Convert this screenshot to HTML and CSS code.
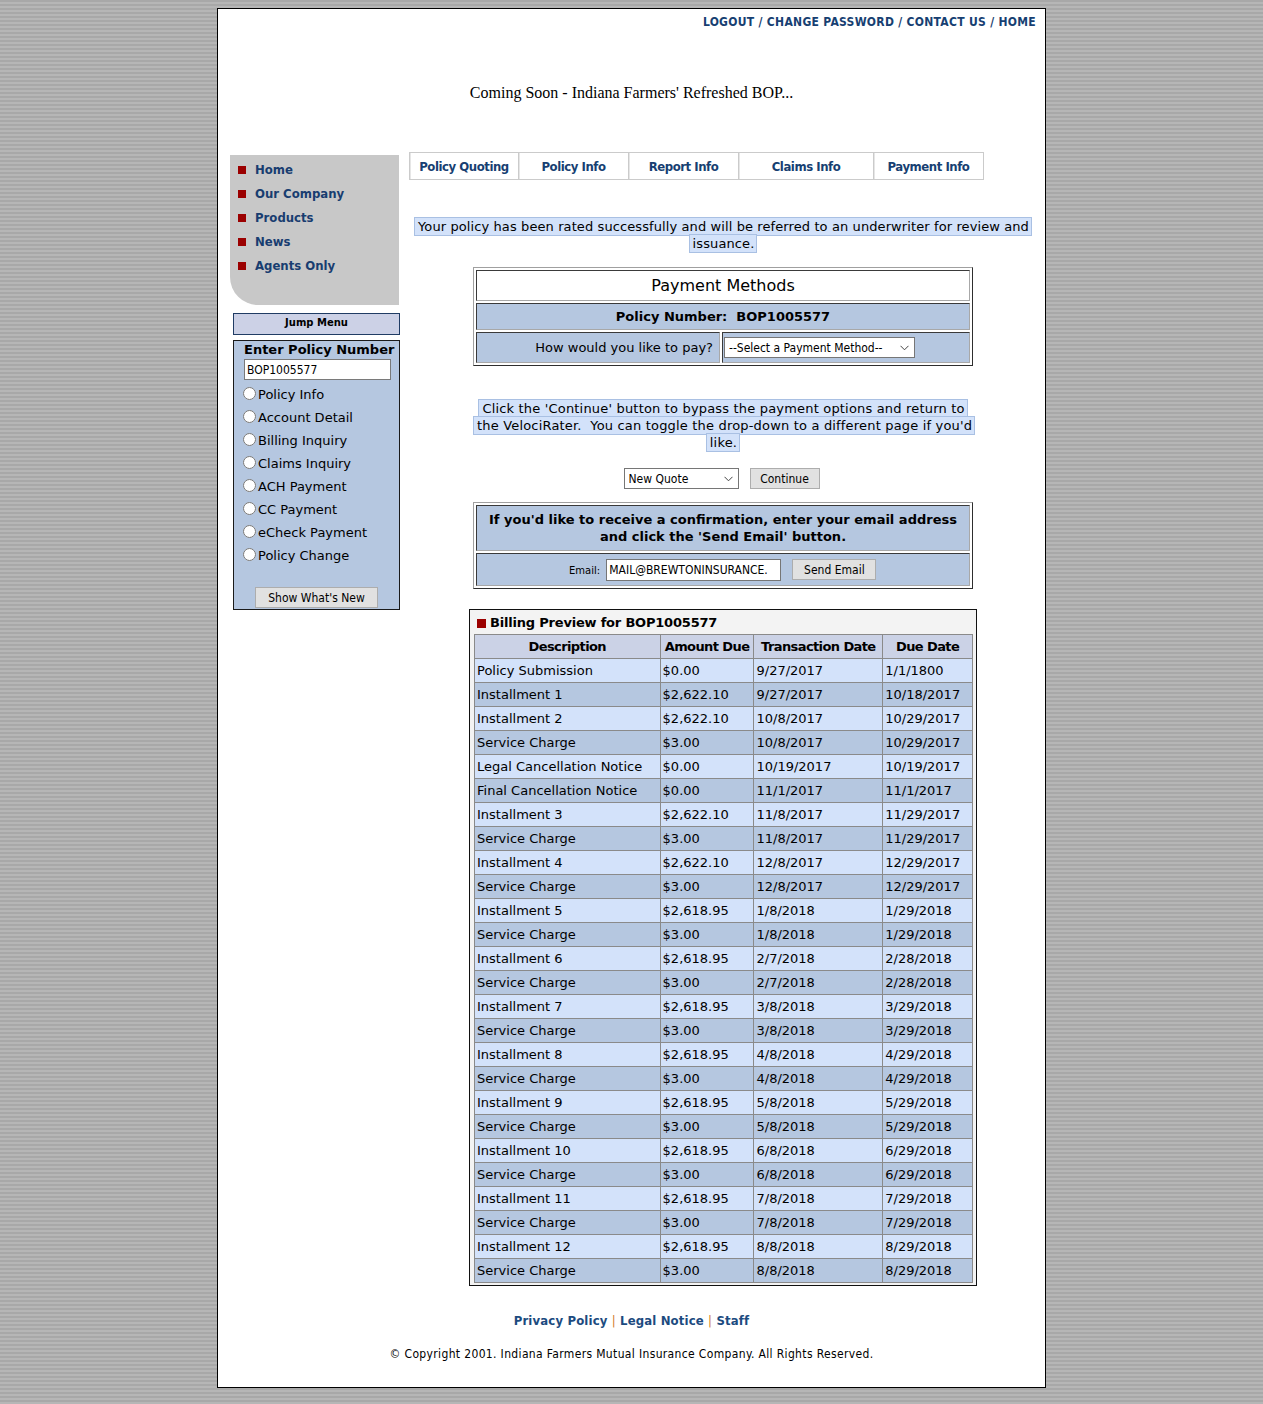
FILE: index.html
```html
<!DOCTYPE html>
<html>
<head>
<meta charset="utf-8">
<title>Payment Methods</title>
<link rel="stylesheet" href="styles.css">
</head>
<body>
<div class="page">
  <div class="toplinks">
    <a href="#">LOGOUT</a> / <a href="#">CHANGE PASSWORD</a> / <a href="#">CONTACT US</a> / <a href="#">HOME</a>
  </div>
  <div class="banner">Coming Soon - Indiana Farmers' Refreshed BOP...</div>

  <div class="layout">
    <div class="sidebar">
      <ul class="sidenav">
        <li><a href="#">Home</a></li>
        <li><a href="#">Our Company</a></li>
        <li><a href="#">Products</a></li>
        <li><a href="#">News</a></li>
        <li><a href="#">Agents Only</a></li>
      </ul>
      <div class="jump-title">Jump Menu</div>
      <div class="jump-panel">
        <div class="jump-label">Enter Policy Number</div>
        <input class="jump-input" type="text" value="BOP1005577">
        <label class="radio"><input type="radio" name="jm">Policy Info</label>
        <label class="radio"><input type="radio" name="jm">Account Detail</label>
        <label class="radio"><input type="radio" name="jm">Billing Inquiry</label>
        <label class="radio"><input type="radio" name="jm">Claims Inquiry</label>
        <label class="radio"><input type="radio" name="jm">ACH Payment</label>
        <label class="radio"><input type="radio" name="jm">CC Payment</label>
        <label class="radio"><input type="radio" name="jm">eCheck Payment</label>
        <label class="radio"><input type="radio" name="jm">Policy Change</label>
        <div class="jump-btnrow"><button class="btn">Show What's New</button></div>
      </div>
    </div>

    <div class="main">
      <div class="tabs">
        <a class="tab" href="#">Policy Quoting</a>
        <a class="tab" href="#">Policy Info</a>
        <a class="tab" href="#">Report Info</a>
        <a class="tab tab-wide" href="#">Claims Info</a>
        <a class="tab" href="#">Payment Info</a>
      </div>

      <p class="notice wide"><span class="hl">Your policy has been rated successfully and will be referred to an underwriter for review and<br>issuance.</span></p>

      <table class="pm">
        <tr><td colspan="2" class="pm-title">Payment Methods</td></tr>
        <tr><td colspan="2" class="pm-policy">Policy Number:&nbsp; BOP1005577</td></tr>
        <tr>
          <td class="pm-q">How would you like to pay?</td>
          <td class="pm-sel">
            <span class="selwrap sel-pay">
              <select><option>--Select a Payment Method--</option></select>
              <svg class="chev" width="9" height="6" viewBox="0 0 9 6"><path d="M0.5 0.8 L4.5 4.8 L8.5 0.8" fill="none" stroke="#444" stroke-width="1"/></svg>
            </span>
          </td>
        </tr>
      </table>

      <p class="notice narrow"><span class="hl">Click the 'Continue' button to bypass the payment options and return to<br>the VelociRater.&nbsp; You can toggle the drop-down to a different page if you'd<br>like.</span></p>

      <div class="continue-row">
        <span class="selwrap sel-quote">
          <select><option>New Quote</option></select>
          <svg class="chev" width="9" height="6" viewBox="0 0 9 6"><path d="M0.5 0.8 L4.5 4.8 L8.5 0.8" fill="none" stroke="#444" stroke-width="1"/></svg>
        </span>
        <button class="btn btn-cont">Continue</button>
      </div>

      <table class="pm email">
        <tr><td class="em-head">If you'd like to receive a confirmation, enter your email address and click the 'Send Email' button.</td></tr>
        <tr>
          <td class="em-row">
            <span class="em-label">Email:</span>
            <input class="em-input" type="text" value="MAIL@BREWTONINSURANCE.">
            <button class="btn btn-send">Send Email</button>
          </td>
        </tr>
      </table>

      <div class="billing">
        <div class="billing-title"><span class="sq"></span>Billing Preview for BOP1005577</div>
        <table class="bill">
          <colgroup><col class="c1"><col class="c2"><col class="c3"><col class="c4"></colgroup>
          <thead>
            <tr><th>Description</th><th>Amount Due</th><th>Transaction Date</th><th>Due Date</th></tr>
          </thead>
          <tbody>
            <tr><td>Policy Submission</td><td>$0.00</td><td>9/27/2017</td><td>1/1/1800</td></tr>
            <tr><td>Installment 1</td><td>$2,622.10</td><td>9/27/2017</td><td>10/18/2017</td></tr>
            <tr><td>Installment 2</td><td>$2,622.10</td><td>10/8/2017</td><td>10/29/2017</td></tr>
            <tr><td>Service Charge</td><td>$3.00</td><td>10/8/2017</td><td>10/29/2017</td></tr>
            <tr><td>Legal Cancellation Notice</td><td>$0.00</td><td>10/19/2017</td><td>10/19/2017</td></tr>
            <tr><td>Final Cancellation Notice</td><td>$0.00</td><td>11/1/2017</td><td>11/1/2017</td></tr>
            <tr><td>Installment 3</td><td>$2,622.10</td><td>11/8/2017</td><td>11/29/2017</td></tr>
            <tr><td>Service Charge</td><td>$3.00</td><td>11/8/2017</td><td>11/29/2017</td></tr>
            <tr><td>Installment 4</td><td>$2,622.10</td><td>12/8/2017</td><td>12/29/2017</td></tr>
            <tr><td>Service Charge</td><td>$3.00</td><td>12/8/2017</td><td>12/29/2017</td></tr>
            <tr><td>Installment 5</td><td>$2,618.95</td><td>1/8/2018</td><td>1/29/2018</td></tr>
            <tr><td>Service Charge</td><td>$3.00</td><td>1/8/2018</td><td>1/29/2018</td></tr>
            <tr><td>Installment 6</td><td>$2,618.95</td><td>2/7/2018</td><td>2/28/2018</td></tr>
            <tr><td>Service Charge</td><td>$3.00</td><td>2/7/2018</td><td>2/28/2018</td></tr>
            <tr><td>Installment 7</td><td>$2,618.95</td><td>3/8/2018</td><td>3/29/2018</td></tr>
            <tr><td>Service Charge</td><td>$3.00</td><td>3/8/2018</td><td>3/29/2018</td></tr>
            <tr><td>Installment 8</td><td>$2,618.95</td><td>4/8/2018</td><td>4/29/2018</td></tr>
            <tr><td>Service Charge</td><td>$3.00</td><td>4/8/2018</td><td>4/29/2018</td></tr>
            <tr><td>Installment 9</td><td>$2,618.95</td><td>5/8/2018</td><td>5/29/2018</td></tr>
            <tr><td>Service Charge</td><td>$3.00</td><td>5/8/2018</td><td>5/29/2018</td></tr>
            <tr><td>Installment 10</td><td>$2,618.95</td><td>6/8/2018</td><td>6/29/2018</td></tr>
            <tr><td>Service Charge</td><td>$3.00</td><td>6/8/2018</td><td>6/29/2018</td></tr>
            <tr><td>Installment 11</td><td>$2,618.95</td><td>7/8/2018</td><td>7/29/2018</td></tr>
            <tr><td>Service Charge</td><td>$3.00</td><td>7/8/2018</td><td>7/29/2018</td></tr>
            <tr><td>Installment 12</td><td>$2,618.95</td><td>8/8/2018</td><td>8/29/2018</td></tr>
            <tr><td>Service Charge</td><td>$3.00</td><td>8/8/2018</td><td>8/29/2018</td></tr>
          </tbody>
        </table>
      </div>
    </div>
  </div>

  <div class="footer">
    <div class="footlinks"><a href="#">Privacy Policy</a> <span class="sep">|</span> <a href="#">Legal Notice</a> <span class="sep">|</span> <a href="#">Staff</a></div>
    <div class="copy">&copy; Copyright 2001. Indiana Farmers Mutual Insurance Company. All Rights Reserved.</div>
  </div>
</div>
</body>
</html>
```

FILE: styles.css
```css
html, body {
  margin: 0;
  padding: 0;
}
body {
  margin: 8px;
  background-color: #aaaaaa;
  background-image: repeating-linear-gradient(to bottom, #a8a8a8 0px, #a8a8a8 2px, #b6b6b6 2px, #b6b6b6 4px);
  font-family: "DejaVu Sans", Verdana, sans-serif;
  font-size: 13px;
  color: #000;
}
a { text-decoration: none; }

.page {
  width: 827px;
  margin: 0 auto;
  background: #fff;
  border: 1px solid #000;
  padding-bottom: 25px;
}

.toplinks {
  text-align: right;
  padding: 6px 9px 0 0;
  font-family: "DejaVu Sans Condensed", Tahoma, sans-serif;
  font-weight: bold;
  font-size: 12px;
  letter-spacing: 0.3px;
  line-height: 14px;
  color: #1a3e6e;
}
.toplinks a { color: #173f72; }

.banner {
  font-family: "Liberation Serif", "Times New Roman", serif;
  font-size: 16px;
  text-align: center;
  padding-top: 54px;
  height: 69px;
  line-height: 20px;
}

.layout {
  display: flex;
  align-items: flex-start;
  padding-left: 12px;
}

/* Sidebar */
.sidebar {
  width: 171px;
  padding-top: 3px;
}
.sidenav {
  list-style: none;
  margin: 0;
  padding: 3px 0 0 0;
  width: 169px;
  height: 147px;
  background: #c8c8c8;
  border-bottom-left-radius: 28px;
}
.sidenav li {
  height: 24px;
  line-height: 16px;
  display: flex;
  align-items: center;
  padding-left: 8px;
}
.sidenav li::before {
  content: "";
  width: 8px;
  height: 8px;
  background: #9b0000;
  margin-right: 9px;
  flex: none;
}
.sidenav a {
  font-family: "DejaVu Sans Condensed", Tahoma, sans-serif;
  font-weight: bold;
  font-size: 13px;
  color: #183d70;
}

.jump-title {
  margin: 8px 0 0 3px;
  width: 165px;
  height: 20px;
  border: 1px solid #203c64;
  background: #ccd1e6;
  text-align: center;
  font-weight: bold;
  font-size: 10px;
  line-height: 18px;
}
.jump-panel {
  margin: 5px 0 0 3px;
  width: 165px;
  border: 1px solid #1a1a1a;
  background: #b5c7e0;
  padding: 1px 0 0 0;
  height: 267px;
}
.jump-label {
  font-weight: bold;
  font-size: 13px;
  line-height: 16px;
  padding-left: 10px;
}
.jump-input {
  display: block;
  margin: 1px 0 3px 10px;
  width: 147px;
  height: 21px;
  box-sizing: border-box;
  border: 1px solid #7a7a7a;
  padding: 0 2px;
  font-family: "DejaVu Sans Condensed", Tahoma, sans-serif;
  font-size: 12px;
  color: #000;
  background: #fff;
}
.radio {
  display: flex;
  align-items: center;
  height: 23px;
  padding-left: 8px;
  font-size: 13px;
}
.radio input {
  margin: 0 2px 3px 1px;
  width: 13px;
  height: 13px;
  accent-color: #333;
}
.jump-btnrow {
  text-align: center;
  margin-top: 20px;
}

.btn {
  font-family: "DejaVu Sans Condensed", Tahoma, sans-serif;
  font-size: 12px;
  background: #e1e1e1;
  border: 1px solid #adadad;
  color: #000;
  height: 21px;
  padding: 0 8px;
  border-radius: 0;
}
.jump-btnrow .btn { width: 123px; padding: 0; }

/* Main */
.main {
  width: 623px;
  margin-left: 8px;
}
.tabs {
  display: flex;
  width: 575px;
}
.tab {
  width: 110px;
  height: 28px;
  box-sizing: border-box;
  border: 1px solid #cbcbcb;
  border-left: 0;
  display: flex;
  align-items: center;
  justify-content: center;
  font-family: "DejaVu Sans Condensed", Tahoma, sans-serif;
  font-weight: bold;
  font-size: 13px;
  letter-spacing: -0.45px;
  color: #173f72;
  background: #fff;
  box-shadow: inset 1px 0 0 #e6e6e6;
}
.tab:first-child { border-left: 1px solid #cbcbcb; }
.tab-wide { width: 135px; }

.notice {
  text-align: center;
  margin: 0;
  font-size: 13px;
  line-height: 17px;
  white-space: nowrap;
}
.notice.wide {
  padding-top: 38px;
  margin-left: 5px;
  letter-spacing: 0.1px;
}
.notice.narrow {
  width: 500px;
  margin: 34px 0 0 64px;
  letter-spacing: 0.18px;
}
.hl {
  background: #d3e2fa;
  border: 1px solid #a9c0e3;
  padding: 1px 2px 1px 3px;
  -webkit-box-decoration-break: clone;
  box-decoration-break: clone;
}

.pm {
  width: 500px;
  margin: 15px 0 0 64px;
  border-collapse: separate;
  border-spacing: 2px;
  border: 1px solid;
  border-color: #a0a0a0 #2e2e2e #2e2e2e #a0a0a0;
}
.pm td {
  border: 1px solid;
  border-color: #3a3a3a #a8a8a8 #a8a8a8 #3a3a3a;
  padding: 0;
}
.pm-title {
  background: #fff;
  text-align: center;
  font-size: 16px;
  height: 29px;
}
.pm-policy {
  background: #b5c7e0;
  text-align: center;
  font-weight: bold;
  font-size: 13px;
  height: 25px;
}
.pm-q {
  background: #b5c7e0;
  text-align: right;
  width: 236px;
  height: 29px;
  padding-right: 6px !important;
  font-size: 13px;
}
.pm-sel {
  background: #b5c7e0;
  padding-left: 1px !important;
}

.selwrap {
  position: relative;
  display: inline-block;
  vertical-align: middle;
}
.selwrap select {
  -webkit-appearance: none;
  appearance: none;
  font-family: "DejaVu Sans Condensed", Tahoma, sans-serif;
  font-size: 12px;
  border: 1px solid #767676;
  background: #fff;
  color: #000;
  height: 21px;
  padding: 0 0 0 4px;
  border-radius: 0;
  box-sizing: border-box;
}
.chev {
  position: absolute;
  right: 6px;
  top: 8px;
  pointer-events: none;
}
.sel-pay select { width: 191px; }
.sel-quote select { width: 115px; }

.continue-row {
  text-align: center;
  margin-top: 17px;
  height: 21px;
  font-size: 0;
  padding-left: 2px;
}
.btn-cont { width: 70px; padding: 0; margin-left: 11px; vertical-align: middle; }

.pm.email { margin-top: 13px; }
.em-head {
  background: #b5c7e0;
  text-align: center;
  font-weight: bold;
  font-size: 13px;
  line-height: 17px;
  padding: 5px 12px !important;
}
.em-row {
  background: #b5c7e0;
  height: 31px;
  padding-left: 92px !important;
  text-align: left;
}
.em-label { font-size: 10px; vertical-align: middle; }
.em-input {
  width: 175px;
  height: 22px;
  box-sizing: border-box;
  border: 1px solid #767676;
  font-family: "DejaVu Sans Condensed", Tahoma, sans-serif;
  font-size: 12px;
  padding: 0 2px;
  margin-left: 2px;
  vertical-align: middle;
}
.btn-send { width: 84px; padding: 0; margin-left: 7px; vertical-align: middle; }

.billing {
  margin: 20px 0 0 60px;
  width: 499px;
  border: 1px solid #111;
  background: #f3f3f3;
  padding: 3px 3px 2px 4px;
}
.billing-title {
  font-weight: bold;
  font-size: 13px;
  letter-spacing: -0.2px;
  line-height: 16px;
  height: 21px;
  display: flex;
  align-items: flex-start;
  padding-left: 3px;
  padding-top: 2px;
  box-sizing: border-box;
}
.sq {
  width: 9px;
  height: 9px;
  background: #9b0000;
  margin: 4px 4px 0 0;
}
.bill {
  border-collapse: collapse;
  width: 499px;
  border: 1px solid #8a8a8a;
}
.bill col.c1 { width: 186px; }
.bill col.c2 { width: 94px; }
.bill col.c3 { width: 129px; }
.bill col.c4 { width: 90px; }
.bill th, .bill td {
  border: 1px solid #8a8a8a;
  height: 23px;
  padding: 0 2px;
  font-size: 13px;
  text-align: left;
  white-space: nowrap;
}
.bill th {
  background: #cbd2e6;
  font-weight: bold;
  text-align: center;
  letter-spacing: -0.6px;
}
.bill tbody tr:nth-child(odd) td { background: #d3e2fa; }
.bill tbody tr:nth-child(even) td { background: #b5c7e0; }

.footer {
  text-align: center;
  padding-top: 27px;
}
.footlinks {
  font-family: "DejaVu Sans Condensed", Tahoma, sans-serif;
  font-weight: bold;
  font-size: 13px;
  letter-spacing: 0.15px;
  line-height: 16px;
}
.footlinks a { color: #1c4b80; }
.sep { color: #d07a2a; font-weight: normal; }
.copy {
  font-family: "DejaVu Sans Condensed", Tahoma, sans-serif;
  font-size: 12px;
  letter-spacing: 0.35px;
  margin-top: 17px;
  line-height: 16px;
}
```
